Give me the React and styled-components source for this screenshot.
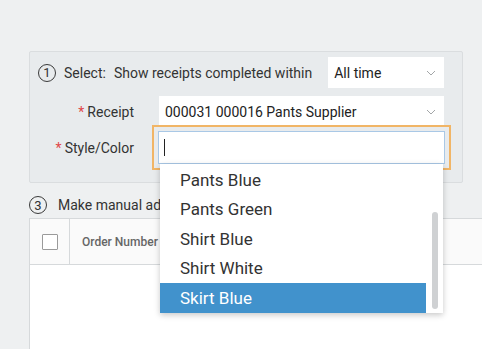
import React from "react";
import styled, { createGlobalStyle } from "styled-components";

const GlobalStyle = createGlobalStyle`
  body {
    margin: 0;
    background: #eef0f1;
    font-family: Roboto, "Liberation Sans", sans-serif;
    color: #333;
  }
`;

const options = ["Pants Blue", "Pants Green", "Shirt Blue", "Shirt White", "Skirt Blue"];

const Chevron = () => (
  <svg width="10" height="6" viewBox="0 0 10 6" fill="none">
    <path d="M1 1l4 4 4-4" stroke="#a3a6a8" strokeWidth="1" />
  </svg>
);

const App = () => {
  return (
    <>
      <GlobalStyle />
      <Page>
        <Panel>
          <StepRow>
            <StepCircle>1</StepCircle>
            <StepText>Select:</StepText>
            <StepText $gap={8}>Show receipts completed within</StepText>
            <SelectBox $width={116} $ml={16}>
              <span>All time</span>
              <Chevron />
            </SelectBox>
          </StepRow>
          <FieldRow $mt={8}>
            <Label>
              <Star>*</Star>Receipt
            </Label>
            <SelectBox $width={285}>
              <span>000031 000016 Pants Supplier</span>
              <Chevron />
            </SelectBox>
          </FieldRow>
          <FieldRow $mt={4}>
            <Label>
              <Star>*</Star>Style/Color
            </Label>
            <Combo>
              <FocusInput>
                <Caret />
              </FocusInput>
              <Menu>
                <Options>
                  {options.map((o, i) => (
                    <Option key={o} $active={i === options.length - 1}>
                      {o}
                    </Option>
                  ))}
                </Options>
                <Track>
                  <Thumb />
                </Track>
              </Menu>
            </Combo>
          </FieldRow>
        </Panel>
        <Heading>
          <StepCircle>3</StepCircle>
          <HeadingText>Make manual adjustments</HeadingText>
        </Heading>
        <Table>
          <HeaderRow>
            <CheckCell>
              <Checkbox />
            </CheckCell>
            <HeadCell>Order Number</HeadCell>
            <HeadCell>Style</HeadCell>
            <HeadCell>Color</HeadCell>
          </HeaderRow>
          <Body />
        </Table>
      </Page>
    </>
  );
};

export default App;

const Page = styled.div`
  height: 349px;
  box-sizing: border-box;
  padding: 51px 0 0 29px;
  overflow: hidden;
  display: flex;
  flex-direction: column;
`;

const Panel = styled.div`
  width: 434px;
  box-sizing: border-box;
  background: #e8ebed;
  border: 1px solid #dadddf;
  border-radius: 2px;
  padding: 5px 0 18px 0;
`;

const StepRow = styled.div`
  display: flex;
  align-items: center;
  height: 31px;
  padding-left: 8px;
`;

const StepCircle = styled.div`
  width: 18px;
  height: 18px;
  box-sizing: border-box;
  border: 1px solid #3a3a3a;
  border-radius: 50%;
  display: flex;
  align-items: center;
  justify-content: center;
  font-size: 13px;
  line-height: 1;
  color: #333;
  flex-shrink: 0;
`;

const StepText = styled.span`
  font-size: 14px;
  margin-left: ${(p) => p.$gap ?? 8}px;
  white-space: nowrap;
`;

const SelectBox = styled.div`
  width: ${(p) => p.$width}px;
  height: 31px;
  margin-left: ${(p) => p.$ml ?? 0}px;
  box-sizing: border-box;
  background: #fff;
  display: flex;
  align-items: center;
  justify-content: space-between;
  padding: 0 8px 0 6px;
  font-size: 14px;
  color: #222;
  white-space: nowrap;
`;

const FieldRow = styled.div`
  display: flex;
  align-items: center;
  margin-top: ${(p) => p.$mt}px;
`;

const Label = styled.div`
  width: 104px;
  margin-right: 25px;
  text-align: right;
  font-size: 14px;
  white-space: nowrap;
`;

const Star = styled.span`
  color: #e04848;
  margin-right: 3px;
`;

const Combo = styled.div`
  position: relative;
  margin-left: -1px;
`;

const FocusInput = styled.div`
  width: 287px;
  height: 33px;
  box-sizing: border-box;
  background: #fff;
  border: 1px solid #a9c8e6;
  outline: 2px solid #f1b566;
  outline-offset: 4px;
  display: flex;
  align-items: center;
  padding-left: 5px;
`;

const Caret = styled.span`
  width: 1px;
  height: 17px;
  background: #222;
`;

const Menu = styled.div`
  position: absolute;
  top: 100%;
  left: 2px;
  width: 283px;
  background: #fff;
  box-shadow: 0 2px 6px rgba(0, 0, 0, 0.22);
  display: flex;
  z-index: 5;
`;

const Options = styled.div`
  flex: 1;
  padding-top: 1px;
`;

const Option = styled.div`
  height: 29.5px;
  display: flex;
  align-items: center;
  padding-left: 20px;
  font-size: 17px;
  color: ${(p) => (p.$active ? "#fff" : "#333")};
  background: ${(p) => (p.$active ? "#4192cc" : "transparent")};
`;

const Track = styled.div`
  width: 17px;
  display: flex;
  justify-content: center;
  padding: 48px 0 4px;
`;

const Thumb = styled.div`
  width: 6px;
  border-radius: 3px;
  background: #cfd1d3;
`;

const Heading = styled.div`
  display: flex;
  align-items: center;
  margin-top: 13px;
  height: 18px;
`;

const HeadingText = styled.span`
  font-size: 14px;
  margin-left: 11px;
  white-space: nowrap;
`;

const Table = styled.div`
  margin-top: 4px;
  flex: 1;
  background: #fff;
  border-left: 1px solid #d6d9db;
  border-top: 1px solid #d6d9db;
  display: flex;
  flex-direction: column;
`;

const HeaderRow = styled.div`
  display: flex;
  height: 45px;
  background: #fafafa;
  border-bottom: 1px solid #d6d9db;
`;

const CheckCell = styled.div`
  width: 39px;
  border-right: 1px solid #d6d9db;
  display: flex;
  align-items: center;
  justify-content: center;
`;

const Checkbox = styled.div`
  width: 16px;
  height: 16px;
  box-sizing: border-box;
  border: 1px solid #9a9a9a;
  background: #fff;
  border-radius: 1px;
  margin-left: 1px;
`;

const HeadCell = styled.div`
  display: flex;
  align-items: center;
  padding: 0 30px 0 12px;
  font-size: 12px;
  font-weight: 500;
  color: #666;
  white-space: nowrap;
`;

const Body = styled.div`
  flex: 1;
  background: #fff;
`;
